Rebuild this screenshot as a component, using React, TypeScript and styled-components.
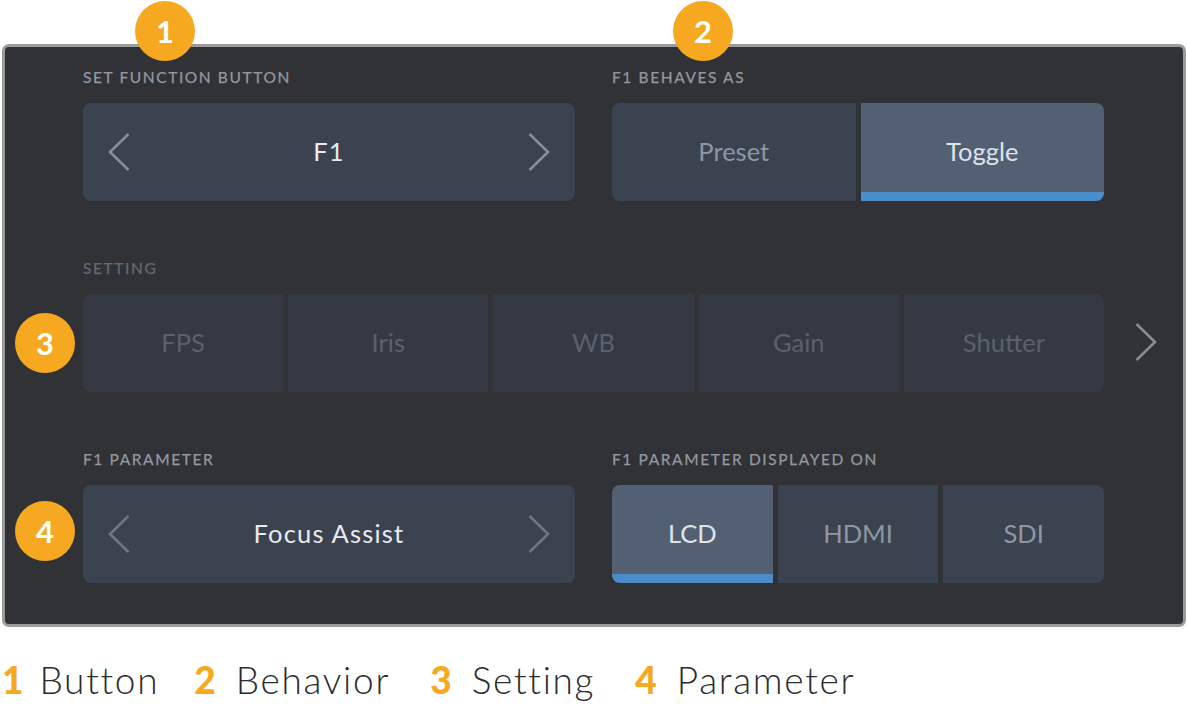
import React from 'react';
import styled, { createGlobalStyle } from 'styled-components';

const Global = createGlobalStyle`
  html, body { margin: 0; padding: 0; background: #fff; }
  body { font-family: "Lato", "Open Sans", sans-serif; }
`;

const Page = styled.div`
  position: relative;
  width: 1187px;
  height: 706px;
  padding: 44px 0 0 2px;
  box-sizing: border-box;
  overflow: hidden;
`;

const Panel = styled.div`
  width: 1184px;
  height: 583px;
  box-sizing: border-box;
  border: 3px solid #9b9b9b;
  border-radius: 7px;
  background: #313235;
  padding: 22px 0 0 78px;
`;

const Row = styled.div`
  display: flex;
  gap: 37px;
  margin-bottom: 59px;
`;

const Field = styled.div`
  width: 492px;
  display: flex;
  flex-direction: column;
`;

const WideField = styled.div`
  position: relative;
  width: 1021px;
  display: flex;
  flex-direction: column;
  margin-bottom: 59px;
`;

const Label = styled.div<{ $dim?: boolean }>`
  height: 16px;
  line-height: 16px;
  margin-bottom: 18px;
  font-size: 15.5px;
  font-weight: 400;
  letter-spacing: 1.6px;
  -webkit-text-stroke: 0.25px currentColor;
  color: ${p => (p.$dim ? '#646a74' : '#9398a1')};
`;

const Stepper = styled.div`
  height: 98px;
  display: flex;
  align-items: center;
  justify-content: space-between;
  padding: 0 24px;
  border-radius: 8px;
  background: #3b4350;
`;

const StepValue = styled.span`
  font-size: 25.5px;
  letter-spacing: 1.2px;
  padding-bottom: 2px;
  color: #e8eaee;
`;

const Segments = styled.div`
  display: flex;
  gap: 5px;
  height: 98px;
`;

const Segment = styled.div<{ $active?: boolean; $dim?: boolean }>`
  flex: 1;
  display: flex;
  align-items: center;
  justify-content: center;
  box-sizing: border-box;
  font-size: 25.5px;
  background: ${p => (p.$active ? '#536074' : p.$dim ? '#343944' : '#3b4350')};
  color: ${p => (p.$active ? '#dfe3ea' : p.$dim ? '#5b616c' : '#8f96a3')};
  border-bottom: ${p => (p.$active ? '9px solid #4b8ccb' : 'none')};
  padding-top: ${p => (p.$active ? '7px' : '0')};
  padding-bottom: ${p => (p.$active ? '0' : '2px')};
  &:first-child { border-radius: 8px 0 0 8px; }
  &:last-child { border-radius: 0 8px 8px 0; }
`;

const NextArrow = styled.div`
  position: absolute;
  right: -54px;
  top: 62px;
  line-height: 0;
`;

const Badge = styled.div<{ $x: number; $y: number }>`
  position: absolute;
  left: ${p => p.$x}px;
  top: ${p => p.$y}px;
  width: 60px;
  height: 60px;
  border-radius: 50%;
  background: #f6a821;
  color: #fff;
  font-size: 31px;
  font-weight: 700;
  display: flex;
  align-items: center;
  justify-content: center;
`;

const Legend = styled.div`
  display: flex;
  margin-top: 28px;
  height: 48px;
  align-items: center;
  font-size: 37px;
  font-weight: 300;
  letter-spacing: 1.7px;
  color: #2b2b2e;
`;

const LegendNumber = styled.span`
  color: #f6a821;
  font-weight: 900;
  letter-spacing: 0;
  margin-right: 20px;
`;

const LegendItem = styled.div`
  display: flex;
  align-items: center;
  margin-right: 40px;
  &:first-child {
    margin-right: 35px;
  }
  &:first-child ${LegendNumber} {
    margin-right: 16px;
  }
`;

const Chevron = ({ dir, color }: { dir: 'left' | 'right'; color: string }) => (
  <svg width="24" height="40" viewBox="0 0 24 40" fill="none">
    <path
      d={dir === 'left' ? 'M21.5 2 L3 20 L21.5 38' : 'M2.5 2 L21 20 L2.5 38'}
      stroke={color}
      strokeWidth="2.6"
    />
  </svg>
);

const legend = ['Button', 'Behavior', 'Setting', 'Parameter'];

export default function App() {
  return (
    <Page>
      <Global />
      <Panel>
        <Row>
          <Field>
            <Label>SET FUNCTION BUTTON</Label>
            <Stepper>
              <Chevron dir="left" color="#868d99" />
              <StepValue>F1</StepValue>
              <Chevron dir="right" color="#868d99" />
            </Stepper>
          </Field>
          <Field>
            <Label>F1 BEHAVES AS</Label>
            <Segments>
              <Segment>Preset</Segment>
              <Segment $active>Toggle</Segment>
            </Segments>
          </Field>
        </Row>
        <WideField>
          <Label $dim>SETTING</Label>
          <Segments>
            {['FPS', 'Iris', 'WB', 'Gain', 'Shutter'].map(s => (
              <Segment $dim key={s}>{s}</Segment>
            ))}
          </Segments>
          <NextArrow>
            <Chevron dir="right" color="#868d99" />
          </NextArrow>
        </WideField>
        <Row>
          <Field>
            <Label>F1 PARAMETER</Label>
            <Stepper>
              <Chevron dir="left" color="#6f7683" />
              <StepValue>Focus Assist</StepValue>
              <Chevron dir="right" color="#6f7683" />
            </Stepper>
          </Field>
          <Field>
            <Label>F1 PARAMETER DISPLAYED ON</Label>
            <Segments>
              <Segment $active>LCD</Segment>
              <Segment>HDMI</Segment>
              <Segment>SDI</Segment>
            </Segments>
          </Field>
        </Row>
      </Panel>
      <Legend>
        {legend.map((l, i) => (
          <LegendItem key={l}>
            <LegendNumber>{i + 1}</LegendNumber>
            {l}
          </LegendItem>
        ))}
      </Legend>
      <Badge $x={135} $y={1}>1</Badge>
      <Badge $x={673} $y={1}>2</Badge>
      <Badge $x={15} $y={313}>3</Badge>
      <Badge $x={15} $y={501}>4</Badge>
    </Page>
  );
}
